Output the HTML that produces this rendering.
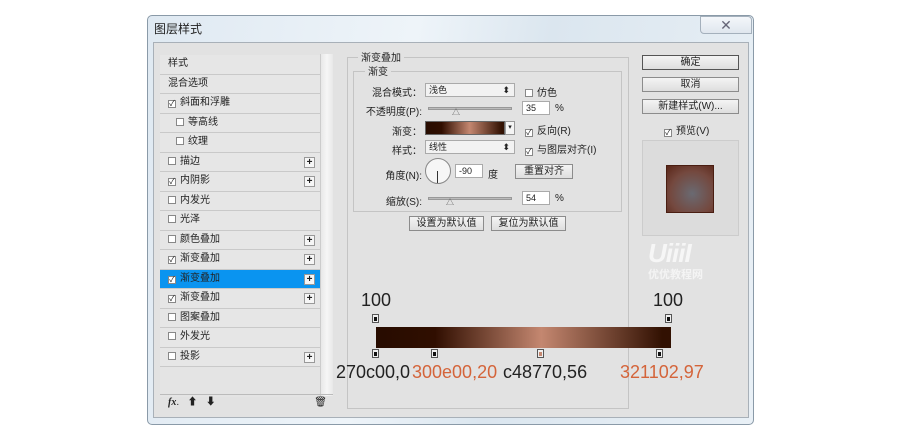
<!DOCTYPE html>
<html><head><meta charset="utf-8"><style>
*{margin:0;padding:0;box-sizing:border-box}
body{width:900px;height:432px;background:#fff;position:relative;overflow:hidden;font-family:"Liberation Sans","Noto Sans CJK SC",sans-serif;font-size:10px;color:#222}
.a{position:absolute}
.win{left:147px;top:15px;width:607px;height:410px;border:1px solid #8a9aa8;border-radius:5px;background:linear-gradient(100deg,#dfe9f2,#eef4f9 40%,#dbe6ef 60%,#e9f0f6);}
.body{left:153px;top:42px;width:596px;height:376px;background:#e2e2e2;border:1px solid #a8b0b8}
.list{left:160px;top:55px;width:160px;height:342px;background:#e4e4e4}
.it{position:absolute;left:0;width:160px;height:19.5px;border-bottom:1px solid #c9c9c9;line-height:18px;padding-left:8px;background:#e6e6e6}
.cb{display:inline-block;width:8px;height:8px;border:1px solid #888;background:#fff;margin-right:4px;vertical-align:-1px;font-size:8px;line-height:6px;text-align:center}
.pl{position:absolute;right:5px;top:4px;width:11px;height:11px;border:1px solid #999;background:#f6f6f6;font-size:10px;line-height:9px;text-align:center;font-weight:bold}
.sb{left:320px;top:54px;width:13px;height:342px;background:linear-gradient(90deg,#e8e8e8,#f6f6f6,#e8e8e8);border-left:1px solid #ccc}
.btn{position:absolute;border:1px solid #8c8c8c;background:linear-gradient(#f4f4f4,#dedede);text-align:center;line-height:13px;font-size:10px}
.inp{position:absolute;background:#fff;border:1px solid #aaa;height:14px;line-height:12px;padding-left:3px;font-size:9px}
.lbl{position:absolute;font-size:10px;text-align:right}
.sl{position:absolute;height:3px;background:#bbb;border:1px solid #999}
.big{position:absolute;font-size:18px;font-family:"Liberation Sans",sans-serif}
.stop{position:absolute;width:7px;height:9px;background:#f0f0f0;border:1px solid #555}
.stop i{position:absolute;left:1px;top:2px;width:3px;height:4px;background:#111}
</style></head><body>
<div class="a win"></div>
<div class="a" style="left:154px;top:20px;font-size:12px">图层样式</div>
<div class="a" style="left:700px;top:16px;width:52px;height:18px;border:1px solid #a4b0bc;border-radius:0 4px 0 4px;background:linear-gradient(#f4f7fa,#dfe6ee);text-align:center;font-size:14px;line-height:16px;color:#667">✕</div>
<div class="a body"></div>
<div class="a list">
<div class="it" style="top:0">样式</div>
<div class="it" style="top:19.5px">混合选项</div>
<div class="it" style="top:39px"><span class="cb">✓</span>斜面和浮雕</div>
<div class="it" style="top:58.5px;padding-left:16px"><span class="cb"></span>等高线</div>
<div class="it" style="top:78px;padding-left:16px"><span class="cb"></span>纹理</div>
<div class="it" style="top:97.5px"><span class="cb"></span>描边<span class="pl">+</span></div>
<div class="it" style="top:117px"><span class="cb">✓</span>内阴影<span class="pl">+</span></div>
<div class="it" style="top:136.5px"><span class="cb"></span>内发光</div>
<div class="it" style="top:156px"><span class="cb"></span>光泽</div>
<div class="it" style="top:175.5px"><span class="cb"></span>颜色叠加<span class="pl">+</span></div>
<div class="it" style="top:195px"><span class="cb">✓</span>渐变叠加<span class="pl">+</span></div>
<div class="it" style="top:214.5px;background:#0a94f0;color:#222"><span class="cb">✓</span>渐变叠加<span class="pl">+</span></div>
<div class="it" style="top:234px"><span class="cb">✓</span>渐变叠加<span class="pl">+</span></div>
<div class="it" style="top:253.5px"><span class="cb"></span>图案叠加</div>
<div class="it" style="top:273px"><span class="cb"></span>外发光</div>
<div class="it" style="top:292.5px"><span class="cb"></span>投影<span class="pl">+</span></div>
</div>
<div class="a sb"></div>
<div class="a" style="left:160px;top:394px;width:173px;height:17px;border-top:1px solid #bbb;font-size:10px;line-height:16px;padding-left:8px"><i style="font-family:'Liberation Serif',serif;font-weight:bold">fx</i>. &nbsp;&nbsp;⬆ &nbsp;&nbsp;⬇<span style="position:absolute;right:6px">🗑</span></div>
<div class="a" style="left:347px;top:57px;width:282px;height:352px;border:1px solid #c4c4c4"></div>
<div class="a" style="left:358px;top:49px;background:#e2e2e2;padding:0 3px">渐变叠加</div>
<div class="a" style="left:353px;top:71px;width:269px;height:141px;border:1px solid #c4c4c4"></div>
<div class="a" style="left:365px;top:63px;background:#e2e2e2;padding:0 3px">渐变</div>
<div class="lbl" style="left:340px;width:82px;top:84px">混合模式：</div>
<div class="inp" style="left:425px;top:83px;width:90px;background:#f2f2f2">浅色<span style="position:absolute;right:4px">⬍</span></div>
<div class="a" style="left:525px;top:84px"><span class="cb"></span>仿色</div>
<div class="lbl" style="left:340px;width:82px;top:103px">不透明度(P):</div>
<div class="sl" style="left:428px;top:107px;width:84px"></div>
<div class="a" style="left:452px;top:107px;font-size:8px;color:#555">△</div>
<div class="inp" style="left:522px;top:101px;width:28px">35</div>
<div class="a" style="left:555px;top:103px">%</div>
<div class="lbl" style="left:340px;width:82px;top:123px">渐变：</div>
<div class="a" style="left:425px;top:121px;width:80px;height:14px;border:1px solid #666;background:linear-gradient(90deg,#270c00,#300e00 20%,#c48770 56%,#321102 97%)"></div>
<div class="a" style="left:505px;top:121px;width:10px;height:14px;border:1px solid #999;background:#f4f4f4;font-size:7px;text-align:center;line-height:12px">▾</div>
<div class="a" style="left:525px;top:122px"><span class="cb">✓</span>反向(R)</div>
<div class="lbl" style="left:340px;width:82px;top:142px">样式：</div>
<div class="inp" style="left:425px;top:140px;width:90px;background:#f2f2f2">线性<span style="position:absolute;right:4px">⬍</span></div>
<div class="a" style="left:525px;top:141px"><span class="cb">✓</span>与图层对齐(I)</div>
<div class="lbl" style="left:340px;width:82px;top:167px">角度(N):</div>
<div class="a" style="left:425px;top:158px;width:26px;height:26px;border-radius:50%;border:1px solid #888;background:#f6f6f6"></div>
<div class="a" style="left:437px;top:171px;width:1px;height:12px;background:#333"></div>
<div class="inp" style="left:455px;top:164px;width:28px">-90</div>
<div class="a" style="left:488px;top:166px">度</div>
<div class="btn" style="left:515px;top:164px;width:58px">重置对齐</div>
<div class="lbl" style="left:340px;width:82px;top:193px">缩放(S):</div>
<div class="sl" style="left:428px;top:197px;width:84px"></div>
<div class="a" style="left:446px;top:197px;font-size:8px;color:#555">△</div>
<div class="inp" style="left:522px;top:191px;width:28px">54</div>
<div class="a" style="left:555px;top:193px">%</div>
<div class="btn" style="left:409px;top:216px;width:75px">设置为默认值</div>
<div class="btn" style="left:491px;top:216px;width:75px">复位为默认值</div>
<div class="btn" style="left:642px;top:55px;width:97px;border-color:#555">确定</div>
<div class="btn" style="left:642px;top:77px;width:97px">取消</div>
<div class="btn" style="left:642px;top:99px;width:97px">新建样式(W)...</div>
<div class="a" style="left:664px;top:122px"><span class="cb">✓</span>预览(V)</div>
<div class="a" style="left:642px;top:140px;width:97px;height:96px;border:1px solid #ccc;background:#dcdcdc"></div>
<div class="a" style="left:666px;top:165px;width:48px;height:48px;background:radial-gradient(circle at 55% 60%,#6a6a72,#74483e 60%,#5a2618);border:1px solid #4a1e12"></div>
<div class="a" style="left:648px;top:238px;font-size:26px;font-weight:bold;font-style:italic;color:#f6f6f6;letter-spacing:-1px">UiiiI</div>
<div class="a" style="left:648px;top:266px;font-size:11px;font-weight:bold;color:#f4f4f4">优优教程网</div>
<div class="big" style="left:361px;top:290px">100</div>
<div class="big" style="left:653px;top:290px">100</div>
<div class="stop" style="left:372px;top:314px"><i></i></div>
<div class="stop" style="left:665px;top:314px"><i></i></div>
<div class="a" style="left:376px;top:327px;width:295px;height:21px;background:linear-gradient(90deg,#270c00,#300e00 20%,#c48770 56%,#321102 97%)"></div>
<div class="stop" style="left:372px;top:349px"><i></i></div>
<div class="stop" style="left:431px;top:349px"><i></i></div>
<div class="stop" style="left:537px;top:349px"><i style="background:#c48770"></i></div>
<div class="stop" style="left:656px;top:349px"><i></i></div>
<div class="big" style="left:336px;top:362px">270c00,0</div>
<div class="big" style="left:412px;top:362px;color:#d4643a">300e00,20</div>
<div class="big" style="left:503px;top:362px">c48770,56</div>
<div class="big" style="left:620px;top:362px;color:#d4643a">321102,97</div>
</body></html>
